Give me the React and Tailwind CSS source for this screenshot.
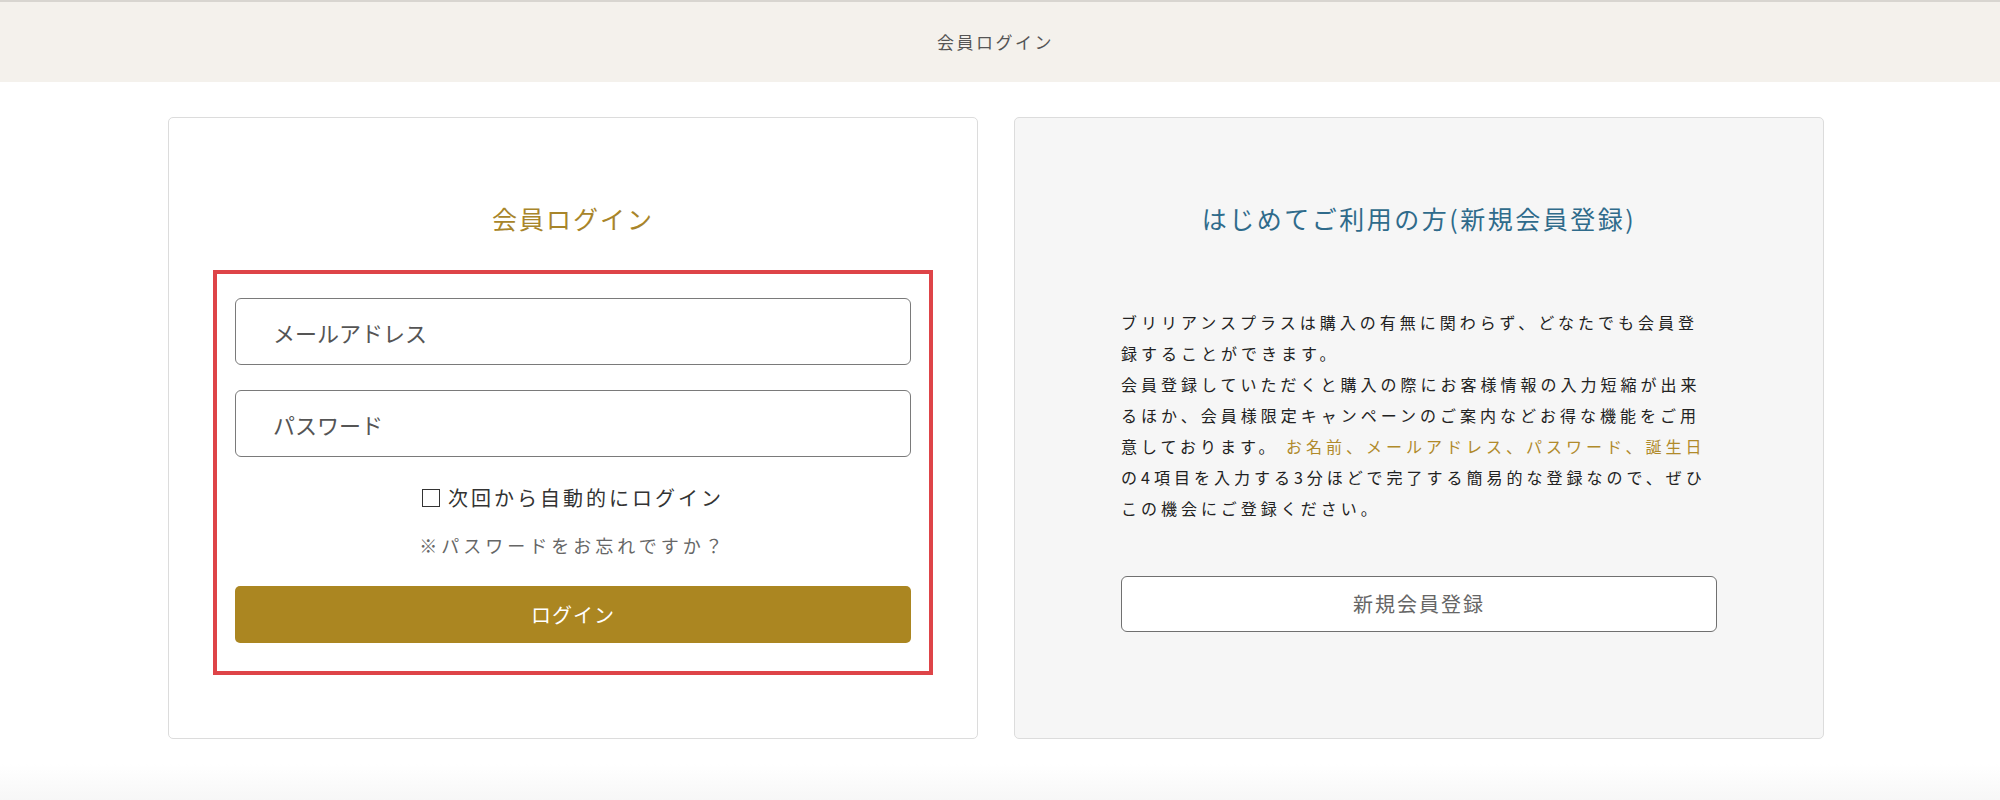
const jp = { fontFamily: '"Noto Sans CJK JP", "Noto Sans", sans-serif' };

function Header() {
  return (
    <div className="h-[82px] border-t-2 border-[#d8d5d0] bg-[#f4f1ec] flex items-center justify-center pr-[9px]">
      <h1 className="text-[17px] tracking-[2.5px] text-[#555]">会員ログイン</h1>
    </div>
  );
}

function LoginCard() {
  return (
    <div className="bg-white border border-[#dcdcdc] rounded-[5px] px-[44px] pt-[82px] pb-[63px]">
      <h2 className="text-center text-[25px] leading-[36px] tracking-[2px] text-[#a8852a]">会員ログイン</h2>
      {/* red marker around the form */}
      <div className="mt-[34px] border-4 border-[#de4448] px-[18px] pt-[24px] pb-[28px]">
        <input
          type="text"
          placeholder="メールアドレス"
          className="block w-full h-[67px] rounded-[6px] border border-[#7a7a7a] pl-[37px] text-[22px] text-[#333] placeholder:text-[#555] outline-none"
          style={jp}
        />
        <input
          type="password"
          placeholder="パスワード"
          className="mt-[25px] block w-full h-[67px] rounded-[6px] border border-[#7a7a7a] pl-[37px] text-[22px] text-[#333] placeholder:text-[#555] outline-none"
          style={jp}
        />
        <label className="mt-[26px] flex items-center justify-center gap-[8px] h-[30px] cursor-pointer">
          <span className="w-[18px] h-[18px] border-[1.5px] border-[#333] bg-white" />
          <span className="text-[20px] tracking-[3px] text-[#333]">次回から自動的にログイン</span>
        </label>
        <p className="mt-[17px] text-center text-[18px] leading-[30px] tracking-[4px] text-[#666]">
          ※パスワードをお忘れですか？
        </p>
        <button className="mt-[26px] w-full h-[57px] rounded-[5px] bg-[#ab8621] text-white text-[20px] tracking-[1px]" style={jp}>
          ログイン
        </button>
      </div>
    </div>
  );
}

function RegisterCard() {
  const lines = [
    "ブリリアンスプラスは購入の有無に関わらず、どなたでも会員登",
    "録することができます。",
    "会員登録していただくと購入の際にお客様情報の入力短縮が出来",
    "るほか、会員様限定キャンペーンのご案内などお得な機能をご用",
  ];
  return (
    <div className="bg-[#f6f6f6] border border-[#dcdcdc] rounded-[5px] px-[106px] pt-[82px]">
      <h2 className="text-center text-[25px] leading-[36px] tracking-[2.5px] text-[#2f6b8b]">
        はじめてご利用の方(新規会員登録)
      </h2>
      <div className="mt-[71px] text-[16px] leading-[31px] tracking-[4px] text-[#222] whitespace-nowrap">
        {lines.map((l) => (
          <div key={l}>{l}</div>
        ))}
        <div>
          意しております。 <span className="text-[#b08a2a]">お名前、メールアドレス、パスワード、誕生日</span>
        </div>
        <div>の4項目を入力する3分ほどで完了する簡易的な登録なので、ぜひ</div>
        <div>この機会にご登録ください。</div>
      </div>
      <button className="mt-[52px] w-full h-[56px] rounded-[6px] border border-[#707070] bg-white text-[20px] tracking-[2px] text-[#666]" style={jp}>
        新規会員登録
      </button>
    </div>
  );
}

export default function App() {
  return (
    <div className="w-full min-h-[800px] bg-white" style={jp}>
      <Header />
      <div className="ml-[168px] mt-[35px] w-[1656px] grid grid-cols-[810px_810px] gap-[36px]">
        <LoginCard />
        <RegisterCard />
      </div>
      <div className="mt-[25px] h-[60px] bg-linear-to-b from-white to-[#f2f2f2]" />
    </div>
  );
}
